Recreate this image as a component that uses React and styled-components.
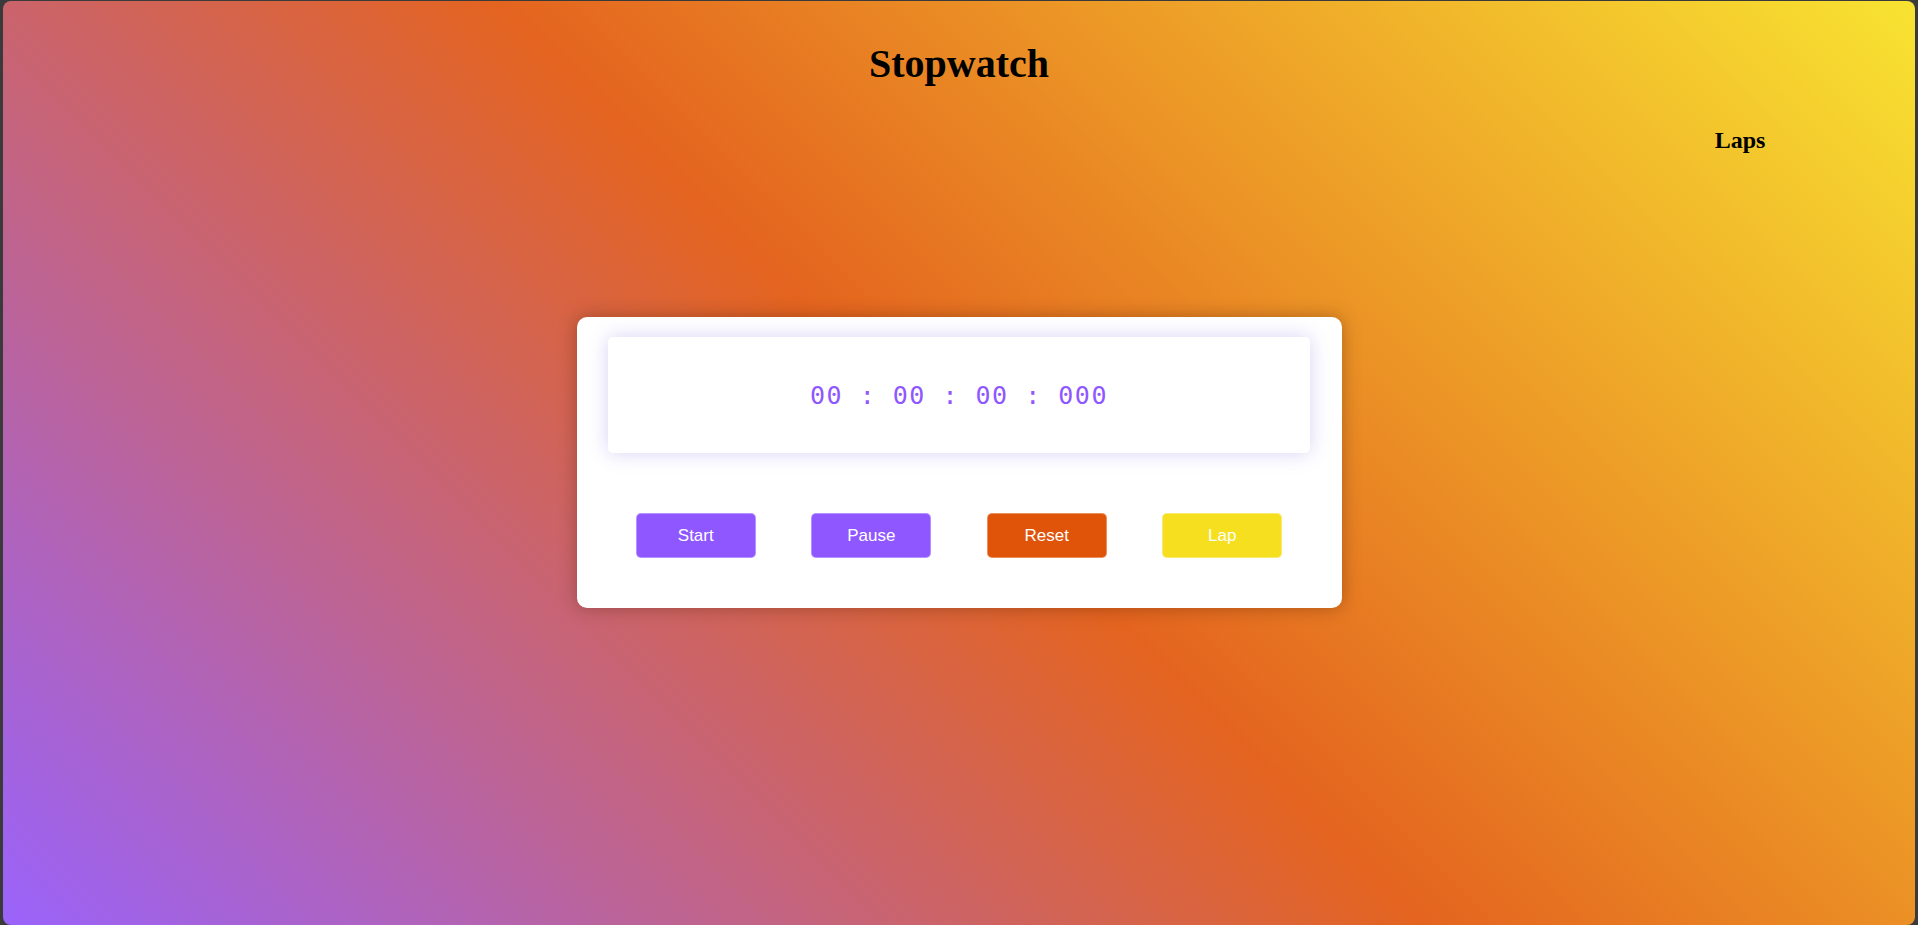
import styled, { createGlobalStyle } from 'styled-components';

const GlobalStyle = createGlobalStyle`
    html, body {
        margin : 0;
        padding : 0;
        background : #3a3a3a;
        overflow : hidden;
    }
    * {
        box-sizing : border-box;
    }
`;

const buttons = [
    { label : 'Start', color : '#8f57ff' },
    { label : 'Pause', color : '#8f57ff' },
    { label : 'Reset', color : '#e0540a' },
    { label : 'Lap', color : '#f6df1f' },
];

function App() {
    return (
        <>
            <GlobalStyle />
            <Page>
                <Title>Stopwatch</Title>
                <LapsPanel>
                    <LapsTitle>Laps</LapsTitle>
                </LapsPanel>
                <Card>
                    <Display>
                        <Time>00 : 00 : 00 : 000</Time>
                    </Display>
                    <Controls>
                        {buttons.map((b) => (
                            <ControlButton key={b.label} $color={b.color}>
                                {b.label}
                            </ControlButton>
                        ))}
                    </Controls>
                </Card>
            </Page>
        </>
    );
}

export default App;

const Page = styled.div`
    display : grid;
    grid-template-columns : 1fr auto 1fr;
    grid-template-rows : 1fr auto 1fr;
    margin : 1px 3px 0 3px;
    height : calc(100vh - 1px);
    padding-bottom : 1px;
    border-radius : 8px;
    overflow : hidden;
    background : linear-gradient(45deg, #9a63fb, #e4641f, #f8e331);
`;

const Title = styled.h1`
    grid-column : 2;
    grid-row : 1;
    align-self : start;
    justify-self : center;
    margin : 39px 0 0 0;
    font-family : "Liberation Serif", "Times New Roman", serif;
    font-size : 40px;
    font-weight : 700;
    color : #000000;
`;

const LapsPanel = styled.div`
    grid-column : 3;
    grid-row : 1;
    align-self : start;
    justify-self : end;
    width : 350px;
    margin-top : 126px;
    text-align : center;
`;

const LapsTitle = styled.h2`
    margin : 0;
    font-family : "Liberation Serif", "Times New Roman", serif;
    font-size : 24px;
    font-weight : 700;
    color : #000000;
`;

const Card = styled.div`
    grid-column : 2;
    grid-row : 2;
    display : flex;
    flex-direction : column;
    gap : 60px;
    width : 765px;
    padding : 20px 31.5px 50px;
    background : #ffffff;
    border-radius : 10px;
    box-shadow : 0 0 18px rgba(60, 20, 0, 0.35);
`;

const Display = styled.div`
    display : flex;
    justify-content : center;
    align-items : center;
    height : 116px;
    background : #ffffff;
    border-radius : 5px;
    box-shadow : 0 0 20px rgba(120, 90, 220, 0.28);
`;

const Time = styled.span`
    font-family : "DejaVu Sans Mono", "Liberation Mono", monospace;
    font-size : 25px;
    letter-spacing : 1.5px;
    color : #8f57ff;
`;

const Controls = styled.div`
    display : flex;
    justify-content : space-around;
    align-items : center;
`;

const ControlButton = styled.button`
    width : 120px;
    height : 45px;
    border : 1px solid rgba(255, 255, 255, 0.35);
    border-radius : 5px;
    background : ${(p) => p.$color};
    color : #ffffff;
    font-family : "Liberation Sans", Arial, sans-serif;
    font-size : 17px;
    cursor : pointer;
`;
